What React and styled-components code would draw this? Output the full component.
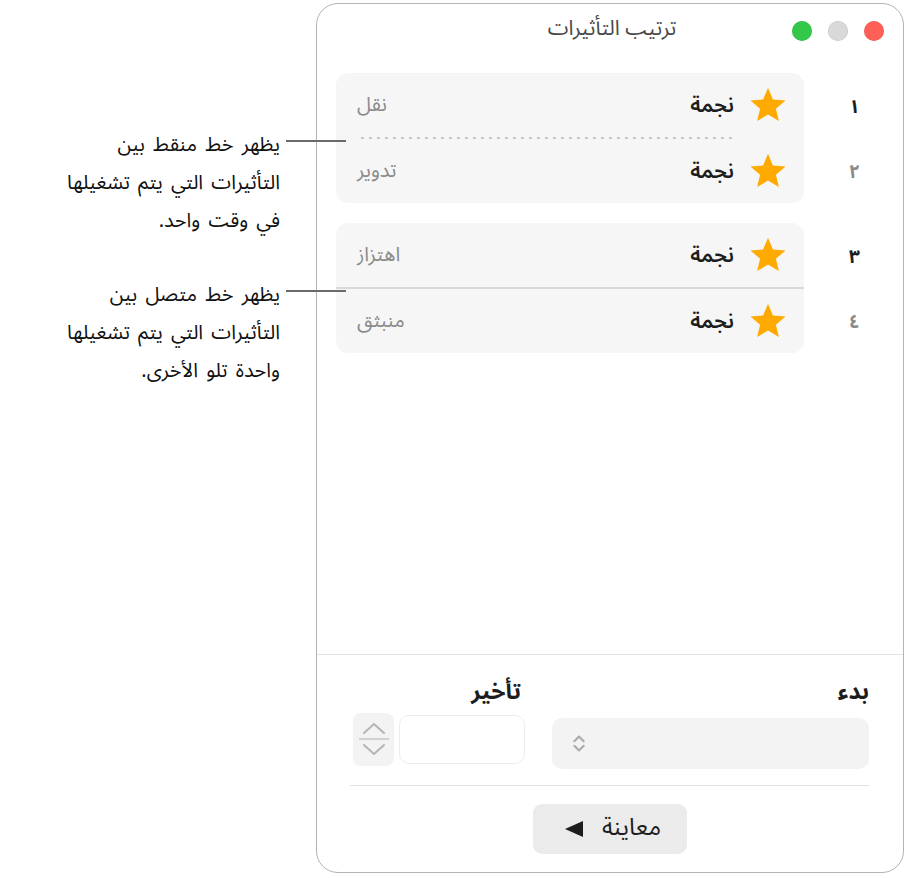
import styled, { createGlobalStyle } from "styled-components";

const GlobalStyle = createGlobalStyle`
  html, body {
    margin: 0;
    padding: 0;
    background: #ffffff;
  }
  body {
    font-family: "Noto Sans Arabic", "Noto Sans", "DejaVu Sans", sans-serif;
    color: #1d1d1f;
  }
`;

const Page = styled.div`
  width: 907px;
  height: 878px;
  box-sizing: border-box;
  padding: 3px 3px 0 0;
  display: flex;
  align-items: flex-start;
`;

const Window = styled.div`
  width: 588px;
  height: 870px;
  box-sizing: border-box;
  border: 1.5px solid #b4b4b4;
  border-radius: 22px;
  background: #ffffff;
  display: flex;
  flex-direction: column;
  overflow: hidden;
`;

const TitleBar = styled.div`
  height: 50px;
  display: grid;
  grid-template-columns: 1fr auto 1fr;
  align-items: center;
`;

const Lights = styled.div`
  display: flex;
  gap: 16px;
  padding-right: 19px;
  padding-top: 3px;
`;

const Light = styled.span`
  width: 20px;
  height: 20px;
  border-radius: 50%;
  background: ${(p) => p.$color};
  box-shadow: inset 0 0 0 0.5px rgba(0, 0, 0, 0.12);
`;

const Title = styled.div`
  font-size: 21px;
  color: #4a4a4a;
  margin-top: -3px;
  padding-left: 4px;
`;

const List = styled.div`
  display: flex;
  flex-direction: column;
  gap: 20px;
  padding: 19px 0 0 19px;
`;

const Group = styled.div`
  display: flex;
`;

const Numbers = styled.div`
  width: 99px;
  display: flex;
  flex-direction: column;
`;

const Num = styled.div`
  height: 64px;
  display: flex;
  align-items: center;
  justify-content: center;
  font-size: 19px;
  font-weight: 700;
  color: ${(p) => (p.$muted ? "#8a8a8a" : "#1d1d1d")};
  padding: 3px 0 0 2px;
  box-sizing: border-box;
  & + & {
    margin-top: 1px;
  }
`;

const Card = styled.div`
  flex: 1;
  background: #f6f6f6;
  border-radius: 12px;
  display: flex;
  flex-direction: column;
`;

const Row = styled.div`
  height: 64px;
  display: flex;
  align-items: center;
  gap: 14px;
  padding: 0 16px 0 21px;
`;

const Name = styled.span`
  font-size: 21px;
  font-weight: 600;
  color: #1d1d1d;
`;

const Effect = styled.span`
  margin-right: auto;
  font-size: 20px;
  color: #8b8b8b;
`;

const Divider = styled.div`
  height: ${(p) => (p.$dashed ? "2px" : "1.5px")};
  background: ${(p) =>
    p.$dashed
      ? "repeating-linear-gradient(to left, #c9c9c9 0 3px, transparent 3px 8px)"
      : "#d9d9d9"};
  margin: ${(p) => (p.$dashed ? "0 72px 0 21px" : "0")};
`;

const Footer = styled.div`
  margin-top: auto;
  border-top: 1.5px solid #e2e2e2;
  padding: 21px 34px 18px 33px;
  display: flex;
  flex-direction: column;
`;

const Fields = styled.div`
  display: flex;
  gap: 27px;
`;

const Field = styled.div`
  display: flex;
  flex-direction: column;
  width: ${(p) => p.$width}px;
`;

const Label = styled.div`
  font-size: 23px;
  font-weight: 700;
  color: #1d1d1d;
  line-height: 32px;
  padding-right: ${(p) => p.$inset || 0}px;
`;

const Select = styled.div`
  margin-top: 10px;
  height: 51px;
  border-radius: 10px;
  background: #f3f3f3;
  display: flex;
  align-items: center;
  justify-content: flex-end;
  padding-left: 20px;
`;

const DelayRow = styled.div`
  margin-top: 5px;
  display: flex;
  align-items: flex-start;
  gap: 5px;
`;

const Input = styled.div`
  margin-top: 2px;
  width: 126px;
  height: 49px;
  box-sizing: border-box;
  border: 1.5px solid #ececec;
  border-radius: 10px;
  background: #ffffff;
`;

const Stepper = styled.div`
  width: 41px;
  height: 53px;
  border-radius: 8px;
  background: #f3f3f3;
  display: flex;
  flex-direction: column;
  align-items: center;
  justify-content: center;
  gap: 3px;
`;

const StepLine = styled.div`
  width: 30px;
  height: 1.5px;
  background: #d2d2d2;
`;

const Rule = styled.div`
  height: 1.5px;
  background: #e2e2e2;
  margin-top: 16px;
`;

const PreviewButton = styled.button`
  align-self: center;
  margin-top: 18px;
  width: 154px;
  height: 50px;
  border: none;
  border-radius: 9px;
  background: #ebebeb;
  font-family: inherit;
  font-size: 24px;
  color: #1d1d1d;
  display: flex;
  align-items: center;
  justify-content: center;
  gap: 18px;
  padding: 0 0 4px 6px;
  & > svg {
    margin-top: 4px;
  }
`;

const Notes = styled.div`
  flex: 1;
  display: flex;
  flex-direction: column;
  gap: 36px;
  padding-top: 123px;
`;

const Note = styled.p`
  position: relative;
  margin: 0;
  padding-right: 36px;
  font-size: 20px;
  word-spacing: 3px;
  line-height: 38px;
  color: #111111;
  &::before {
    content: "";
    position: absolute;
    top: 14px;
    right: -30px;
    width: 60px;
    height: 1.5px;
    background: #6a6a6a;
  }
`;

const Star = () => (
  <svg width="40" height="40" viewBox="0 0 24 24">
    <path
      d="M12 1.6l2.95 7.05 7.6.62-5.8 4.96 1.78 7.42L12 17.7l-6.53 3.95 1.78-7.42-5.8-4.96 7.6-.62z"
      fill="#ffaa00"
    />
  </svg>
);

const UpDown = ({ size = 14, color = "#ababab" }) => (
  <svg width={size} height={size * 1.5} viewBox="0 0 12 18" fill="none">
    <path d="M2 7l4-4 4 4M2 11l4 4 4-4" stroke={color} strokeWidth="1.8" strokeLinecap="round" strokeLinejoin="round" />
  </svg>
);

const Chevron = ({ up }) => (
  <svg width="26" height="14" viewBox="0 0 26 14" fill="none">
    <path
      d={up ? "M3 12l10-9 10 9" : "M3 2l10 9 10-9"}
      stroke="#b5b5b5"
      strokeWidth="2"
      strokeLinecap="round"
      strokeLinejoin="round"
    />
  </svg>
);

const PlayLeft = () => (
  <svg width="20" height="18" viewBox="0 0 20 18">
    <polygon points="1,9 19,1 19,17" fill="#1d1d1d" />
  </svg>
);

const groups = [
  {
    dashed: true,
    items: [
      { n: "١", effect: "نقل" },
      { n: "٢", effect: "تدوير" },
    ],
  },
  {
    dashed: false,
    items: [
      { n: "٣", effect: "اهتزاز" },
      { n: "٤", effect: "منبثق" },
    ],
  },
];

const App = () => {
  return (
    <>
      <GlobalStyle />
      <Page dir="rtl">
        <Window>
          <TitleBar>
            <Lights>
              <Light $color="#ff5f57" />
              <Light $color="#d9d9d9" />
              <Light $color="#34c84a" />
            </Lights>
            <Title>ترتيب التأثيرات</Title>
            <span />
          </TitleBar>
          <List>
            {groups.map((g, gi) => (
              <Group key={gi}>
                <Numbers>
                  {g.items.map((it, i) => (
                    <Num key={it.n} $muted={i > 0}>
                      {it.n}
                    </Num>
                  ))}
                </Numbers>
                <Card>
                  <Row>
                    <Star />
                    <Name>نجمة</Name>
                    <Effect>{g.items[0].effect}</Effect>
                  </Row>
                  <Divider $dashed={g.dashed} />
                  <Row>
                    <Star />
                    <Name>نجمة</Name>
                    <Effect>{g.items[1].effect}</Effect>
                  </Row>
                </Card>
              </Group>
            ))}
          </List>
          <Footer>
            <Fields>
              <Field $width={317}>
                <Label>بدء</Label>
                <Select>
                  <UpDown />
                </Select>
              </Field>
              <Field>
                <Label $inset={4}>تأخير</Label>
                <DelayRow>
                  <Input />
                  <Stepper>
                    <Chevron up />
                    <StepLine />
                    <Chevron />
                  </Stepper>
                </DelayRow>
              </Field>
            </Fields>
            <Rule />
            <PreviewButton>
              <span>معاينة</span>
              <PlayLeft />
            </PreviewButton>
          </Footer>
        </Window>
        <Notes>
          <Note>
            يظهر خط منقط بين
            <br />
            التأثيرات التي يتم تشغيلها
            <br />
            في وقت واحد.
          </Note>
          <Note>
            يظهر خط متصل بين
            <br />
            التأثيرات التي يتم تشغيلها
            <br />
            واحدة تلو الأخرى.
          </Note>
        </Notes>
      </Page>
    </>
  );
};

export default App;
